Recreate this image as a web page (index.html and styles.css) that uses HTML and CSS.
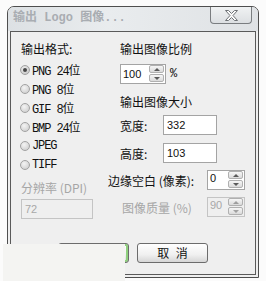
FILE: index.html
```html
<!DOCTYPE html>
<html>
<head>
<meta charset="utf-8">
<link rel="stylesheet" href="styles.css">
</head>
<body>
<div class="window">
  <div class="titlebar">
    <span class="title">输出 Logo 图像...</span>
    <div class="close">
      <svg width="13" height="11" viewBox="0 0 13 11"><polygon points="0.5,0.5 3.5,0.5 6.5,3.5 9.5,0.5 12.5,0.5 8,5.5 12.5,10.5 9.5,10.5 6.5,7.5 3.5,10.5 0.5,10.5 5,5.5" fill="#fbfbfb" stroke="#6e7276" stroke-width="1"/></svg>
    </div>
  </div>
  <div class="client">
    <div class="cols">
      <div class="left">
        <div class="label">输出格式:</div>
        <div class="radios">
          <div class="radio checked"><span class="dot"></span><span class="rt">PNG 24位</span></div>
          <div class="radio"><span class="dot"></span><span class="rt">PNG 8位</span></div>
          <div class="radio"><span class="dot"></span><span class="rt">GIF 8位</span></div>
          <div class="radio"><span class="dot"></span><span class="rt">BMP 24位</span></div>
          <div class="radio"><span class="dot"></span><span class="rt">JPEG</span></div>
          <div class="radio"><span class="dot"></span><span class="rt">TIFF</span></div>
        </div>
        <div class="label gray dpi">分辨率 (DPI)</div>
        <div class="field disabled dpi-field">72</div>
      </div>
      <div class="right">
        <div class="label ind">输出图像比例</div>
        <div class="row scale">
          <div class="spin s100"><span class="val">100</span><span class="arrows"><span class="arr up"></span><span class="arr down"></span></span></div>
          <span class="pct">%</span>
        </div>
        <div class="label ind size">输出图像大小</div>
        <div class="row wh"><span class="lbl">宽度:</span><div class="field wfield">332</div></div>
        <div class="row ht"><span class="lbl">高度:</span><div class="field wfield">103</div></div>
        <div class="row mg"><span class="lbl mlbl">边缘空白 (像素):</span><div class="spin s0"><span class="val top">0</span><span class="arrows"><span class="arr up"></span><span class="arr down"></span></span></div></div>
        <div class="row q"><span class="lbl qlbl gray">图像质量 (%)</span><div class="spin s0 disabled"><span class="val top">90</span><span class="arrows"><span class="arr up"></span><span class="arr down"></span></span></div></div>
      </div>
    </div>
    <div class="buttons">
      <div class="btn ok"></div>
      <div class="btn cancel">取 消</div>
    </div>
  </div>
</div>
<div class="patch"></div>
</body>
</html>
```

FILE: styles.css
```css
body {
  margin: 0;
  width: 266px;
  height: 281px;
  overflow: hidden;
  position: relative;
  background: #fbfbfb;
  font: 12px "Noto Sans CJK SC", sans-serif;
  color: #111;
}

.window {
  margin: 6px 0 0 7px;
  width: 252px;
  height: 272px;
  box-sizing: border-box;
  border: 1px solid #4e4e4e;
  border-radius: 7px 7px 0 0;
  background: #efefef;
  padding: 0 2px 2px;
  display: flex;
  flex-direction: column;
}

.titlebar {
  height: 24px;
  flex: none;
  margin: 0 -2px;
  padding: 0 6px 0 5px;
  display: flex;
  justify-content: space-between;
  align-items: flex-start;
  border-radius: 6px 6px 0 0;
  background: linear-gradient(90deg, #dde1e4 0%, #e9ecee 40%, #dfe2e5 100%);
}

.title {
  line-height: 24px;
  font: bold 12px "Liberation Mono", "Noto Sans CJK SC", monospace;
  color: #a9adb2;
  white-space: nowrap;
}

.close {
  width: 42px;
  height: 17px;
  box-sizing: border-box;
  border: 1px solid #7a7d80;
  border-top: none;
  border-radius: 0 0 4px 4px;
  background: linear-gradient(#f0f2f3, #dcdfe2);
  display: flex;
  justify-content: center;
  align-items: center;
}

.close svg { display: block; }

.client {
  flex: 1;
  box-sizing: border-box;
  border: 1px solid #5a5a5a;
  padding: 9px 0 0 10px;
  display: flex;
  flex-direction: column;
}

.cols {
  display: flex;
  height: 178px;
}

.left {
  width: 87px;
  flex: none;
  display: flex;
  flex-direction: column;
}

.label {
  height: 16px;
  line-height: 16px;
  white-space: nowrap;
}

.gray { color: #a6a6a6; }

.radios { margin-top: 3px; }

.radio {
  height: 19px;
  display: flex;
  align-items: center;
}

.dot {
  width: 10px;
  height: 10px;
  box-sizing: border-box;
  margin-left: -1px;
  margin-right: 2px;
  border: 1px solid #a2a2a2;
  border-radius: 50%;
  background: radial-gradient(circle at 40% 35%, #f4f4f4, #c8c8c8);
  display: flex;
  justify-content: center;
  align-items: center;
}

.checked .dot {
  background: radial-gradient(circle at 40% 35%, #f0f0f0, #bdbdbd);
}

.checked .dot::after {
  content: "";
  width: 4px;
  height: 4px;
  border-radius: 50%;
  background: #474747;
}

.rt {
  font: 12px "Liberation Mono", "Noto Sans CJK SC", monospace;
  letter-spacing: -1.1px;
  white-space: nowrap;
}

.dpi { margin-top: 6px; }

.field {
  height: 20px;
  box-sizing: border-box;
  border: 1px solid #a4a4a4;
  background: #fff;
  font: 11px "Liberation Sans", sans-serif;
  line-height: 18px;
  padding-left: 3px;
}

.field.disabled, .spin.disabled {
  background: #efefef;
  border-color: #c4c4c4;
  color: #a8a8a8;
}

.dpi-field {
  margin-top: 3px;
  width: 72px;
}

.right {
  flex: 1;
  display: flex;
  flex-direction: column;
}

.ind { margin-left: 12px; }

.row {
  display: flex;
  align-items: center;
}

.scale { margin: 7px 0 0 12px; }

.spin {
  height: 20px;
  box-sizing: border-box;
  border: 1px solid #a4a4a4;
  background: #fff;
  display: flex;
  align-items: flex-start;
}

.s100 { width: 46px; }
.s0 { width: 38px; }

.val {
  font: 11px "Liberation Sans", sans-serif;
  line-height: 18px;
  padding-left: 2px;
}

.val.top { line-height: 14px; }

.arrows {
  margin: 0 1px 0 auto;
  display: flex;
  flex-direction: column;
  gap: 1px;
}

.arr {
  width: 15px;
  height: 8px;
  box-sizing: border-box;
  border: 1px solid #b0b0b0;
  border-radius: 2px;
  background: linear-gradient(#f6f6f6, #dadada);
  display: flex;
  justify-content: center;
  align-items: center;
}

.arr::after {
  content: "";
  width: 0;
  height: 0;
  border-left: 3px solid transparent;
  border-right: 3px solid transparent;
}

.up::after { border-bottom: 3px solid #5a5a5a; }
.down::after { border-top: 3px solid #5a5a5a; }

.disabled .arr::after { opacity: 0.5; }

.pct {
  margin-left: 4px;
  font: 12px "Liberation Mono", monospace;
}

.size { margin-top: 10px; }

.wh { margin: 5px 0 0 12px; }
.ht { margin: 8px 0 0 12px; }
.mg { margin-top: 7px; }
.q { margin: 7px 0 0 14px; }

.lbl { width: 43px; white-space: nowrap; }
.mlbl { width: 99px; }
.qlbl { width: 85px; }

.wfield { width: 54px; }

.buttons {
  margin: 24px 0 0 -10px;
  display: flex;
  justify-content: center;
  gap: 8px;
}

.btn {
  width: 71px;
  height: 20px;
  box-sizing: border-box;
  border: 1px solid #6c6c6c;
  border-radius: 3px;
  background: linear-gradient(#ffffff, #f0f0f0 60%, #d6d6d6);
  text-align: center;
  line-height: 18px;
  color: #111;
}

.cancel { word-spacing: 4px; }

.ok { box-shadow: inset 0 0 0 2px #8fd07e; }

.patch {
  position: absolute;
  left: 3px;
  top: 244px;
  width: 122px;
  height: 37px;
  background: #f4f4f2;
}
```
